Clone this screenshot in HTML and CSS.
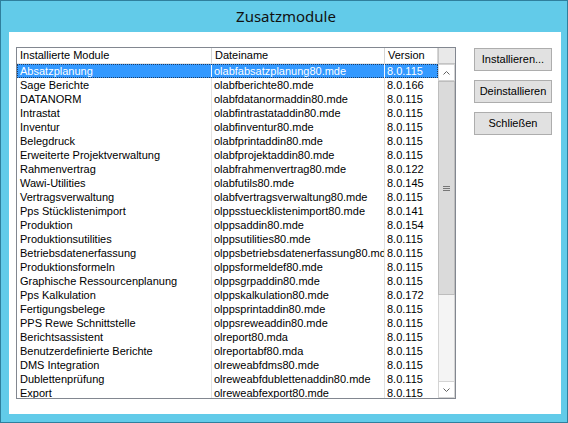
FILE: index.html
```html
<!DOCTYPE html>
<html lang="de">
<head>
<meta charset="utf-8">
<title>Zusatzmodule</title>
<link rel="stylesheet" href="styles.css">
</head>
<body>
<div class="window">
  <div class="titlebar">Zusatzmodule</div>
  <div class="client">
    <div class="listview">
      <div class="lv-header">
        <div class="hcell c1">Installierte Module</div>
        <div class="hcell c2">Dateiname</div>
        <div class="hcell c3">Version</div>
        <div class="hcell filler"></div>
      </div>
      <div class="lv-body">
        <div class="lv-rows">
          <div class="row selected"><span class="cell c1">Absatzplanung</span><span class="cell c2">olabfabsatzplanung80.mde</span><span class="cell c3">8.0.115</span></div>
          <div class="row"><span class="cell c1">Sage Berichte</span><span class="cell c2">olabfberichte80.mde</span><span class="cell c3">8.0.166</span></div>
          <div class="row"><span class="cell c1">DATANORM</span><span class="cell c2">olabfdatanormaddin80.mde</span><span class="cell c3">8.0.115</span></div>
          <div class="row"><span class="cell c1">Intrastat</span><span class="cell c2">olabfintrastataddin80.mde</span><span class="cell c3">8.0.115</span></div>
          <div class="row"><span class="cell c1">Inventur</span><span class="cell c2">olabfinventur80.mde</span><span class="cell c3">8.0.115</span></div>
          <div class="row"><span class="cell c1">Belegdruck</span><span class="cell c2">olabfprintaddin80.mde</span><span class="cell c3">8.0.115</span></div>
          <div class="row"><span class="cell c1">Erweiterte Projektverwaltung</span><span class="cell c2">olabfprojektaddin80.mde</span><span class="cell c3">8.0.115</span></div>
          <div class="row"><span class="cell c1">Rahmenvertrag</span><span class="cell c2">olabfrahmenvertrag80.mde</span><span class="cell c3">8.0.122</span></div>
          <div class="row"><span class="cell c1">Wawi-Utilities</span><span class="cell c2">olabfutils80.mde</span><span class="cell c3">8.0.145</span></div>
          <div class="row"><span class="cell c1">Vertragsverwaltung</span><span class="cell c2">olabfvertragsverwaltung80.mde</span><span class="cell c3">8.0.115</span></div>
          <div class="row"><span class="cell c1">Pps Stücklistenimport</span><span class="cell c2">olppsstuecklistenimport80.mde</span><span class="cell c3">8.0.141</span></div>
          <div class="row"><span class="cell c1">Produktion</span><span class="cell c2">olppsaddin80.mde</span><span class="cell c3">8.0.154</span></div>
          <div class="row"><span class="cell c1">Produktionsutilities</span><span class="cell c2">olppsutilities80.mde</span><span class="cell c3">8.0.115</span></div>
          <div class="row"><span class="cell c1">Betriebsdatenerfassung</span><span class="cell c2">olppsbetriebsdatenerfassung80.mde</span><span class="cell c3">8.0.115</span></div>
          <div class="row"><span class="cell c1">Produktionsformeln</span><span class="cell c2">olppsformeldef80.mde</span><span class="cell c3">8.0.115</span></div>
          <div class="row"><span class="cell c1">Graphische Ressourcenplanung</span><span class="cell c2">olppsgrpaddin80.mde</span><span class="cell c3">8.0.115</span></div>
          <div class="row"><span class="cell c1">Pps Kalkulation</span><span class="cell c2">olppskalkulation80.mde</span><span class="cell c3">8.0.172</span></div>
          <div class="row"><span class="cell c1">Fertigungsbelege</span><span class="cell c2">olppsprintaddin80.mde</span><span class="cell c3">8.0.115</span></div>
          <div class="row"><span class="cell c1">PPS Rewe Schnittstelle</span><span class="cell c2">olppsreweaddin80.mde</span><span class="cell c3">8.0.115</span></div>
          <div class="row"><span class="cell c1">Berichtsassistent</span><span class="cell c2">olreport80.mda</span><span class="cell c3">8.0.115</span></div>
          <div class="row"><span class="cell c1">Benutzerdefinierte Berichte</span><span class="cell c2">olreportabf80.mda</span><span class="cell c3">8.0.115</span></div>
          <div class="row"><span class="cell c1">DMS Integration</span><span class="cell c2">olreweabfdms80.mde</span><span class="cell c3">8.0.115</span></div>
          <div class="row"><span class="cell c1">Dublettenprüfung</span><span class="cell c2">olreweabfdublettenaddin80.mde</span><span class="cell c3">8.0.115</span></div>
          <div class="row"><span class="cell c1">Export</span><span class="cell c2">olreweabfexport80.mde</span><span class="cell c3">8.0.115</span></div>
        </div>
        <div class="scrollbar">
          <div class="sb-btn">
            <svg width="7" height="4" viewBox="0 0 7 4"><polyline points="0.5,3.5 3.5,0.5 6.5,3.5" fill="none" stroke="#606060" stroke-width="1"/></svg>
          </div>
          <div class="sb-track">
            <div class="sb-thumb">
              <svg width="7" height="5" viewBox="0 0 7 5"><path d="M0 0.5H7M0 2.5H7M0 4.5H7" stroke="#777" stroke-width="1"/></svg>
            </div>
          </div>
          <div class="sb-btn">
            <svg width="7" height="4" viewBox="0 0 7 4"><polyline points="0.5,0.5 3.5,3.5 6.5,0.5" fill="none" stroke="#606060" stroke-width="1"/></svg>
          </div>
        </div>
      </div>
    </div>
    <div class="buttons">
      <div class="btn">Installieren...</div>
      <div class="btn">Deinstallieren</div>
      <div class="btn">Schließen</div>
    </div>
  </div>
</div>
</body>
</html>
```
FILE: styles.css
```css
html, body {
  margin: 0;
  padding: 0;
}

body {
  width: 568px;
  height: 423px;
  overflow: hidden;
  font-family: "Liberation Sans", Arial, sans-serif;
  font-size: 11px;
  color: #000;
}

/* dialog frame */
.window {
  box-sizing: border-box;
  width: 568px;
  height: 423px;
  border: 1px solid #2f7f9d;
  background: #62cbe9;
  padding: 0 6px 8px 8px;
  display: flex;
  flex-direction: column;
}

.titlebar {
  height: 31px;
  line-height: 30px;
  text-align: center;
  font-family: "Noto Sans", "Open Sans", sans-serif;
  font-size: 15px;
  color: #111;
  padding-left: 2px;
}

.client {
  flex: 1;
  background: #fff;
  padding: 15px 0 0 7px;
  display: flex;
  align-items: flex-start;
}

/* list view */
.listview {
  box-sizing: border-box;
  width: 440px;
  height: 352px;
  border: 1px solid #828790;
  display: flex;
  flex-direction: column;
  overflow: hidden;
}

.lv-header {
  display: flex;
  height: 16px;
  flex: none;
}

.hcell {
  box-sizing: border-box;
  height: 16px;
  line-height: 15px;
  padding-left: 3px;
  border-right: 1px solid #d5d5d5;
  border-bottom: 1px solid #e5e5e5;
  white-space: nowrap;
  overflow: hidden;
  background: #fff;
}

.hcell.filler {
  width: 17px;
  border-right: none;
  background: #e9e9e9;
  border-left: 1px solid #c4c4c4;
  border-bottom: 1px solid #c4c4c4;
}

.c1 { width: 195px; }
.c2 { width: 173px; }
.c3 { width: 53px; }

.lv-body {
  flex: 1;
  display: flex;
  min-height: 0;
}

.lv-rows {
  width: 421px;
  overflow: hidden;
}

.row {
  display: flex;
  height: 14px;
  line-height: 14px;
}

.cell {
  box-sizing: border-box;
  display: block;
  height: 14px;
  padding-left: 2px;
  white-space: nowrap;
  overflow: hidden;
  border-right: 1px solid #e2e2e2;
}

.cell.c1 { padding-left: 3px; }
.cell.c3 { border-right: none; }

.row.selected {
  background: #3399ff;
  color: #fff;
  outline: 1px dotted #1d3d66;
  outline-offset: -1px;
}

.row.selected .cell {
  border-right-color: #f0f6ff;
}

/* vertical scroll bar */
.scrollbar {
  width: 17px;
  display: flex;
  flex-direction: column;
  background: #f0f0f0;
}

.sb-btn {
  box-sizing: border-box;
  height: 17px;
  flex: none;
  display: flex;
  align-items: center;
  justify-content: center;
  background: #fff;
  border: 1px solid #d4d4d4;
}

.sb-btn svg { display: block; }

.sb-track {
  flex: 1;
  border-left: 1px solid #d4d4d4;
  border-right: 1px solid #d4d4d4;
  background: #f4f4f4;
}

.sb-thumb {
  box-sizing: border-box;
  height: 214px;
  background: #dadada;
  border: 1px solid #bdbdbd;
  margin-left: -1px;
  margin-right: -1px;
  display: flex;
  align-items: center;
  justify-content: center;
}

.sb-thumb svg { display: block; }

/* push buttons */
.buttons {
  margin-left: 18px;
  margin-top: 1px;
  display: flex;
  flex-direction: column;
  gap: 9px;
}

.btn {
  box-sizing: border-box;
  width: 78px;
  height: 23px;
  line-height: 21px;
  text-align: center;
  background: #e1e1e1;
  border: 1px solid #adadad;
  white-space: nowrap;
}
```
